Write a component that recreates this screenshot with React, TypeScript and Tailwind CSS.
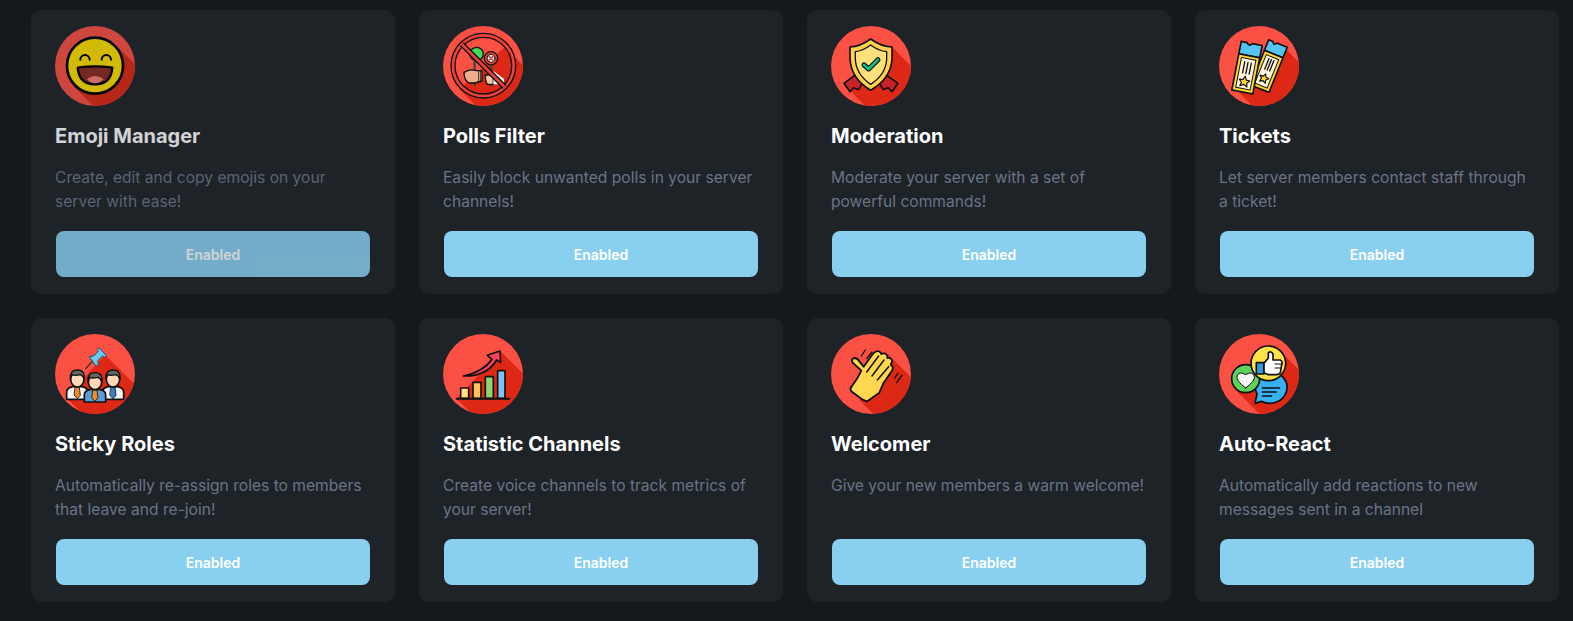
import React from "react";

const K = "#111";
const LIGHT = "#fb5044";
const DARK = "#dc2814";

function Base({ id, box, a, b, children }: { id: string; box: [number, number]; a: [number, number]; b: [number, number]; children: React.ReactNode }) {
  const [x, y] = box;
  const cx = x + 120;
  const cy = y + 120;
  return (
    <svg viewBox={`${x} ${y} 240 240`} className="w-20 h-20 block shrink-0" strokeLinejoin="round" strokeLinecap="round">
      <defs>
        <clipPath id={id}>
          <circle cx={cx} cy={cy} r={120} />
        </clipPath>
      </defs>
      <circle cx={cx} cy={cy} r={120} fill={LIGHT} />
      <polygon clipPath={`url(#${id})`} fill={DARK} points={`${a[0]},${a[1]} ${a[0] + 300},${a[1] + 300} ${b[0] + 300},${b[1] + 300} ${b[0]},${b[1]}`} />
      {children}
    </svg>
  );
}

function EmojiIcon() {
  return (
    <Base id="c1" box={[30, 33]} a={[212, 90]} b={[87, 215]}>
      <circle cx={150} cy={152} r={84} fill="#ffe000" stroke="#000" strokeWidth={8} />
      <path d="M106 134a14 14 0 0 1 28 0M170 134a14 14 0 0 1 28 0" fill="none" stroke="#000" strokeWidth={6} />
      <path d="M98 158Q150 150 202 158Q198 208 150 208Q102 208 98 158Z" fill="#8c2a22" stroke="#000" strokeWidth={7} />
      <path d="M126 192Q150 174 176 192Q164 205 150 205Q136 205 126 192Z" fill="#f77f78" />
    </Base>
  );
}

function PollsIcon() {
  return (
    <Base id="c2" box={[39, 33]} a={[224, 96]} b={[88, 223]}>
      <circle cx={140} cy={117} r={20} fill="#3fdc55" stroke={K} strokeWidth={4} />
      <circle cx={183} cy={130} r={20} fill="#e8413a" stroke={K} strokeWidth={4} />
      <circle cx={183} cy={130} r={12} fill="#f4f0ee" stroke={K} strokeWidth={3} />
      <path d="M177 124l12 12M189 124l-12 12" stroke="#b33" strokeWidth={4} />
      <path d="M134 125V210" stroke="#444" strokeWidth={7} />
      <path d="M184 152V212" stroke="#444" strokeWidth={7} />
      <path d="M102 172Q122 162 134 166L156 168V198L134 204H118Q102 198 102 172Z" fill="#eeae8e" stroke={K} strokeWidth={4} />
      <path d="M146 170V200M152 170V198" stroke={K} strokeWidth={2.5} />
      <path d="M166 180H190V208H172Q166 200 166 180Z" fill="#f3c8a4" stroke={K} strokeWidth={4} />
      <path d="M190 168L222 192V208H190Z" fill="#fff" stroke="none" />
      <circle cx={160} cy={152} r={91} fill="none" stroke={K} strokeWidth={16} />
      <circle cx={160} cy={152} r={91} fill="none" stroke="#ee4238" strokeWidth={8} />
      <path d="M96 88L224 216" stroke={K} strokeWidth={16} strokeLinecap="butt" />
      <path d="M96 88L224 216" stroke="#ee4238" strokeWidth={8} strokeLinecap="butt" />
    </Base>
  );
}

function ShieldIcon() {
  return (
    <Base id="c3" box={[33, 33]} a={[214, 94]} b={[88, 225]}>
      <path d="M108 178L72 205L90 230L100 218L116 224L132 196Z" fill="#c8232c" stroke={K} strokeWidth={5} />
      <path d="M196 178L234 205L216 230L204 218L190 224L172 196Z" fill="#c8232c" stroke={K} strokeWidth={5} />
      <path d="M152 72Q120 95 90 96V130Q92 190 152 226Q214 190 216 130V96Q184 95 152 72Z" fill="#ffd24d" stroke={K} strokeWidth={5} />
      <path d="M152 90Q128 108 106 110V132Q108 178 152 208Q198 178 200 132V110Q176 108 152 90Z" fill="#ffe07a" stroke={K} strokeWidth={4} />
      <path d="M132 150L146 162L174 134" fill="none" stroke={K} strokeWidth={15} />
      <path d="M132 150L146 162L174 134" fill="none" stroke="#11c28b" strokeWidth={8} />
    </Base>
  );
}

function TicketsIcon() {
  return (
    <Base id="c4" box={[42, 33]} a={[238, 98]} b={[85, 215]}>
      <g transform="translate(-14 2) rotate(22 205 150)">
        <path d="M176 78H190Q196 90 202 78H236V112H176Z" fill="#54c5f0" stroke={K} strokeWidth={5} />
        <path d="M176 112H236V224H176Z" fill="#ffd733" stroke={K} strokeWidth={5} />
        <path d="M186 122H226V214H186Z" fill="#fff6dc" stroke={K} strokeWidth={3} />
        <path d="M198 130V164M206 130V164M214 130V164" stroke={K} strokeWidth={4} />
        <path d="M206 176L210 185L220 186L213 193L215 203L206 198L197 203L199 193L192 186L202 185Z" fill="#ffd733" stroke={K} strokeWidth={3.5} />
      </g>
      <g transform="rotate(11 126 158)">
        <path d="M94 84H112Q120 96 128 84H158V122H94Z" fill="#54c5f0" stroke={K} strokeWidth={5} />
        <path d="M94 122H158V232H94Z" fill="#ffd733" stroke={K} strokeWidth={5} />
        <path d="M104 131H148V222H104Z" fill="#fff6dc" stroke={K} strokeWidth={3} />
        <path d="M116 142V176M126 142V176M136 142V176" stroke={K} strokeWidth={4} />
        <path d="M126 184L131 195L142 196L134 204L137 215L126 209L115 215L118 204L110 196L121 195Z" fill="#ffd733" stroke={K} strokeWidth={3.5} />
      </g>
    </Base>
  );
}

function Person({ x, y, body, tie }: { x: number; y: number; body: string; tie: string }) {
  return (
    <g transform={`translate(${x} ${y})`}>
      <path d="M-32 68V46Q-32 34 -14 30H14Q32 34 32 46V68Z" fill={body} stroke={K} strokeWidth={5} />
      <path d="M-6 32H6L9 56L0 66L-9 56Z" fill={tie} stroke={K} strokeWidth={2.5} />
      <ellipse cx={0} cy={8} rx={20} ry={23} fill="#ffd9b8" stroke={K} strokeWidth={5} />
      <path d="M-21 8Q-24 -20 0 -20Q24 -20 21 8Q16 -4 8 -6Q-8 -2 -16 -6Q-20 0 -21 8Z" fill="#666" stroke={K} strokeWidth={4} />
    </g>
  );
}

function StickyIcon() {
  return (
    <Base id="c5" box={[30, 24]} a={[180, 86]} b={[64, 215]}>
      <path d="M122 128L144 104" stroke="#222" strokeWidth={3.5} />
      <path d="M134 92L146 90L160 76L156 70L162 66L184 88L178 94L172 90L158 104L160 116L154 120Z" fill="#6bc9ec" stroke="#1a5a73" strokeWidth={3} />
      <Person x={97} y={152} body="#f4f4f4" tie="#f08a24" />
      <Person x={204} y={152} body="#f4f4f4" tie="#3b7fc4" />
      <Person x={150} y={160} body="#5a9bd8" tie="#f08a24" />
    </Base>
  );
}

function StatsIcon() {
  return (
    <Base id="c6" box={[39, 24]} a={[212, 76]} b={[80, 218]}>
      <path d="M100 150Q160 138 186 100L172 88L210 75L212 110L200 102Q170 152 100 150Z" fill="#f9405c" stroke={K} strokeWidth={5} />
      <rect x={92} y={186} width={24} height={31} fill="#ffe27a" stroke={K} strokeWidth={5} />
      <rect x={129} y={169} width={24} height={48} fill="#ffc35c" stroke={K} strokeWidth={5} />
      <rect x={166} y={152} width={24} height={65} fill="#8ed66f" stroke={K} strokeWidth={5} />
      <rect x={203} y={134} width={22} height={83} fill="#7cc4f8" stroke={K} strokeWidth={5} />
      <path d="M80 218H238" stroke={K} strokeWidth={6} />
    </Base>
  );
}

function WaveIcon() {
  return (
    <Base id="c7" box={[33, 24]} a={[203, 84]} b={[118, 222]}>
      <path d="M124 90L136 72M140 98L156 78M224 156L234 142M230 170L246 148" stroke={K} strokeWidth={4} fill="none" />
      <path d="M124 134L98 110Q92 98 104 96Q112 96 118 106L131 122L160 82Q172 70 182 80L184 84Q196 78 202 90L202 96Q216 94 216 108L212 116Q222 122 216 134L190 172L178 200L142 226Q134 226 118 214L94 196Q88 188 96 180Q112 160 124 134Z" fill="#ffd84f" stroke={K} strokeWidth={5.5} />
      <path d="M140 138L176 90M156 150L192 102M172 162L206 122" stroke={K} strokeWidth={4.5} fill="none" />
    </Base>
  );
}

function ReactIcon() {
  return (
    <Base id="c8" box={[42, 24]} a={[226, 76]} b={[95, 195]}>
      <path d="M195 136a52 48 0 1 1 -26 90L150 232L156 204A52 48 0 0 1 195 136Z" fill="#39aef0" stroke={K} strokeWidth={5} />
      <path d="M172 186H224M172 198H214M172 210H200" stroke={K} strokeWidth={4} />
      <circle cx={122} cy={158} r={42} fill="#5fd25a" stroke={K} strokeWidth={5} />
      <path d="M122 186Q92 164 96 150Q102 134 122 146Q142 134 148 150Q152 164 122 186Z" fill="#f4f4f4" stroke={K} strokeWidth={3} />
      <circle cx={190} cy={112} r={52} fill="#ffe14a" stroke={K} strokeWidth={5} />
      <rect x={154} y={110} width={23} height={34} fill="#2f9be0" stroke={K} strokeWidth={5} />
      <path d="M177 112L190 96V80Q198 74 204 84V102H226Q234 106 230 116L226 140Q222 146 214 146H190L177 140Z" fill="#fff" stroke={K} strokeWidth={5} />
      <path d="M210 114H232M210 126H228" stroke={K} strokeWidth={3.5} />
    </Base>
  );
}

const items: { title: string; desc: string; Icon: () => React.ReactElement; dim?: boolean }[] = [
  { title: "Emoji Manager", desc: "Create, edit and copy emojis on your server with ease!", Icon: EmojiIcon, dim: true },
  { title: "Polls Filter", desc: "Easily block unwanted polls in your server channels!", Icon: PollsIcon },
  { title: "Moderation", desc: "Moderate your server with a set of powerful commands!", Icon: ShieldIcon },
  { title: "Tickets", desc: "Let server members contact staff through a ticket!", Icon: TicketsIcon },
  { title: "Sticky Roles", desc: "Automatically re-assign roles to members that leave and re-join!", Icon: StickyIcon },
  { title: "Statistic Channels", desc: "Create voice channels to track metrics of your server!", Icon: StatsIcon },
  { title: "Welcomer", desc: "Give your new members a warm welcome!", Icon: WaveIcon },
  { title: "Auto-React", desc: "Automatically add reactions to new messages sent in a channel", Icon: ReactIcon },
];

export default function App() {
  return (
    <div className="min-h-screen bg-[#15191e] pl-[31px] pr-[14px] pt-[10px] font-['Inter','Liberation_Sans',sans-serif]">
      <div className="grid grid-cols-4 gap-6">
        {items.map(({ title, desc, Icon, dim }) => (
          <div key={title} className="h-[284px] rounded-[10px] bg-[#1e2328]">
            <div className={`flex h-full flex-col px-6 pt-4 ${dim ? "opacity-80" : ""}`}>
              <Icon />
              <h3 className="mt-[16px] text-[20px] leading-7 font-bold text-white">{title}</h3>
              <p className="mt-[16px] text-[15.6px] leading-6 text-[#697586]">{desc}</p>
              <button className="mx-px mt-auto mb-[17px] h-[46px] rounded-lg bg-[#89cff0] text-[14px] font-semibold text-white">
                Enabled
              </button>
            </div>
          </div>
        ))}
      </div>
    </div>
  );
}
